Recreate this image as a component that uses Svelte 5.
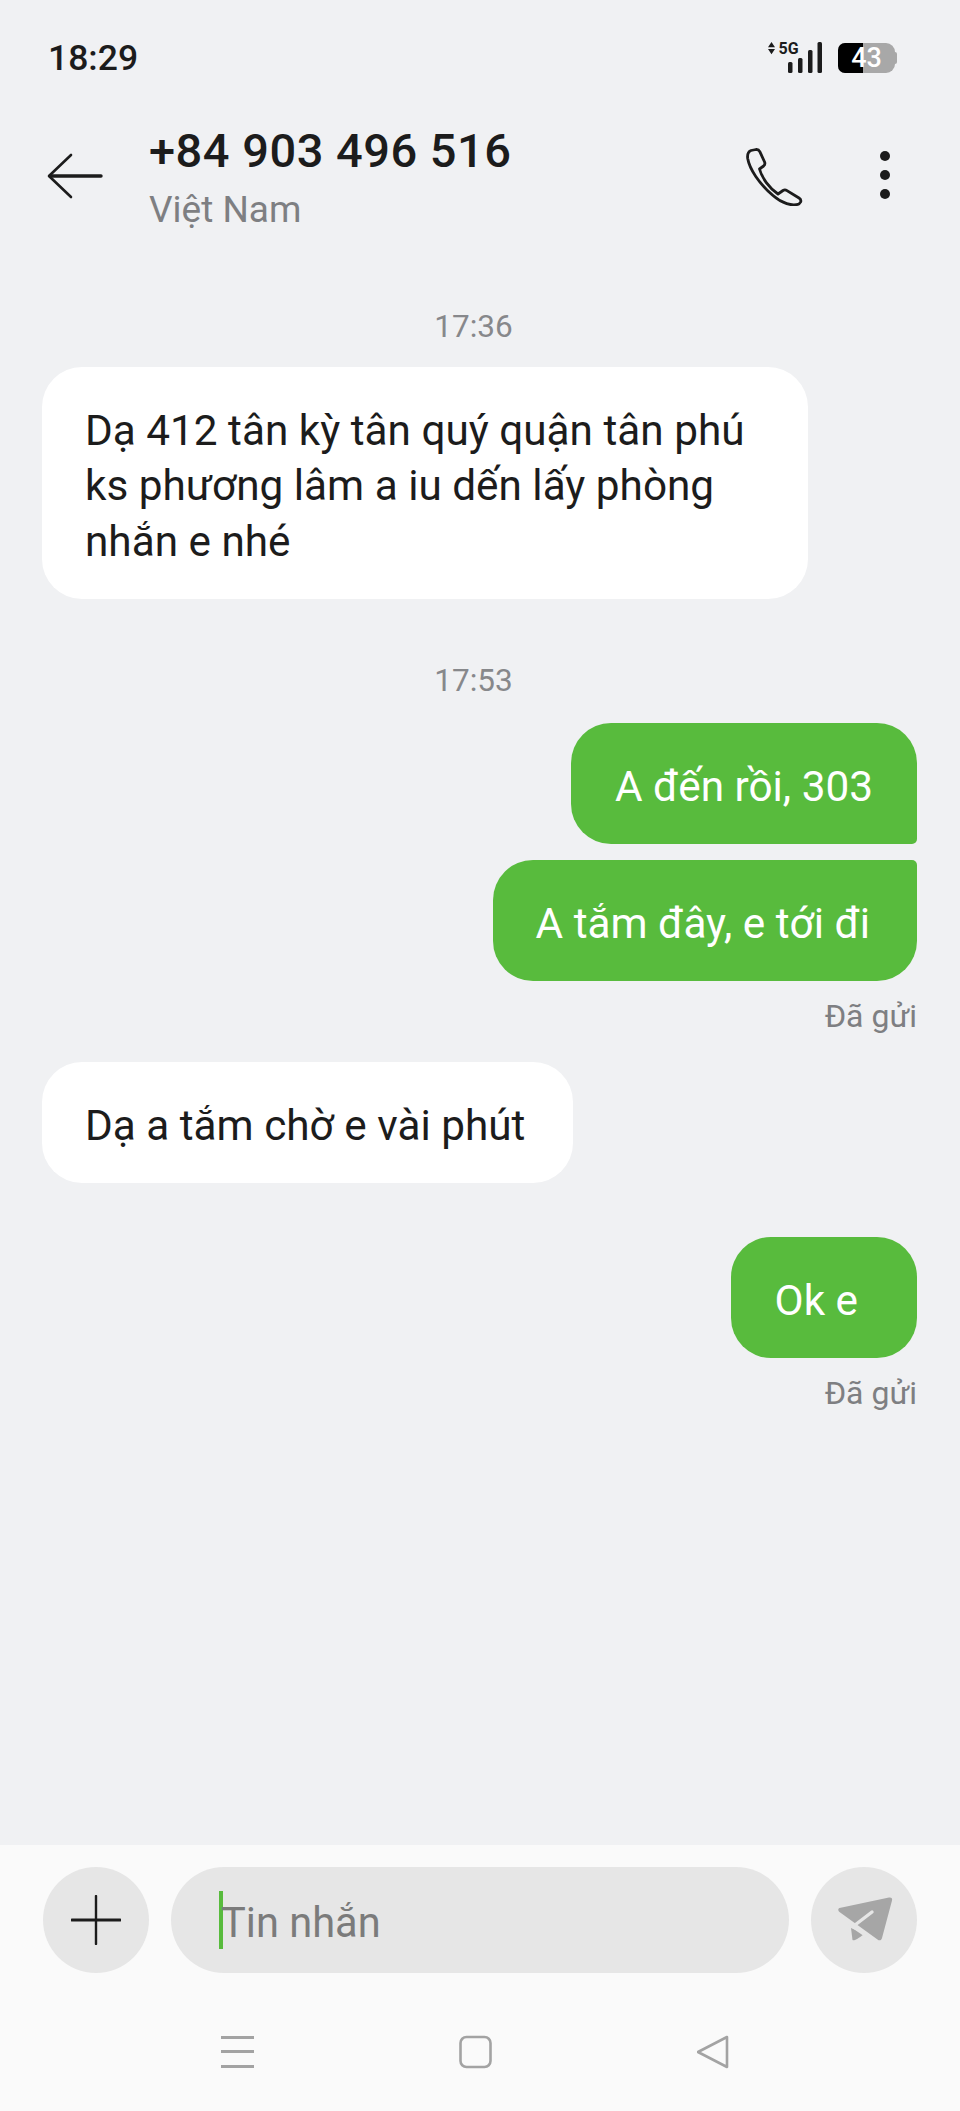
<script>
	const firstReply = "Dạ 412 tân kỳ tân quý quận tân phú ks phương lâm a iu dến lấy phòng nhắn e nhé";
</script>

<div class="screen">
	<div class="status-bar">
		<span class="clock">18:29</span>
		<div class="status-icons">
			<svg class="signal" width="54" height="36" viewBox="0 -4 54 36">
				<path d="M0 5.200 3.500 0 7 5.200ZM0 7 3.500 12.200 7 7Z" fill="#1c1c1c" />
				<text x="10.500" y="11.500" class="five-g">5G</text>
				<rect x="20" y="20" width="4.500" height="11" rx="1.500" />
				<rect x="30" y="16" width="4.500" height="15" rx="1.500" />
				<rect x="40" y="8" width="4.500" height="23" rx="1.500" />
				<rect x="49.500" y="0" width="4.500" height="31" rx="1.500" />
			</svg>
			<div class="battery">
				<div class="battery-used"></div>
				<span class="battery-level">43</span>
			</div>
		</div>
	</div>

	<header class="top-bar">
		<svg class="back" width="56" height="46" viewBox="0 0 56 46" fill="none" stroke="#1c1c1c" stroke-linecap="round" stroke-linejoin="round">
			<path d="M24 2 2 23 24 44" stroke-width="2.600" />
			<path d="M3 23H54" stroke-width="3.400" />
		</svg>
		<div class="contact">
			<div class="number">+84 903 496 516</div>
			<div class="country">Việt Nam</div>
		</div>
		<svg class="phone" width="58" height="58" viewBox="0 0 58 58" fill="none" stroke="#1c1c1c" stroke-width="2.800" stroke-linejoin="round">
			<path d="M5 2.500 10 1.500C12 1.300 13 2 13.800 3.600L18.600 14C19.200 15.600 19 16.800 17.600 18L13.500 21C16 30 23 40 32 46L37 42.500C38.400 41.600 39.600 41.700 41 42.600L53 50C54.600 51 55.200 52.400 54.600 54L53 56C46 58.500 36 55.500 27 47.500 13 35.500 3.500 21 1.700 10.500 1.200 6.500 2.500 3.500 5 2.500Z" />
		</svg>
		<div class="kebab">
			<span></span><span></span><span></span>
		</div>
	</header>

	<main class="thread">
		<div class="time first">17:36</div>
		<div class="bubble in wide">{firstReply}</div>

		<div class="time second">17:53</div>
		<div class="bubble out tail-bottom">A đến rồi, 303</div>
		<div class="bubble out tail-top">A tắm đây, e tới đi</div>
		<div class="sent">Đã gửi</div>

		<div class="bubble in after-sent">Dạ a tắm chờ e vài phút</div>

		<div class="bubble out after-in">Ok e</div>
		<div class="sent">Đã gửi</div>
	</main>

	<footer class="bottom">
		<div class="composer">
			<button class="round" aria-label="add">
				<svg width="50" height="50" viewBox="0 0 50 50" stroke="#1c1c1c" stroke-linecap="round">
					<path d="M25 1V49" stroke-width="2.400" />
					<path d="M1 25H49" stroke-width="3" />
				</svg>
			</button>
			<div class="input">
				<span class="caret"></span>
				<span class="placeholder">Tin nhắn</span>
			</div>
			<button class="round" aria-label="send">
				<svg class="plane" width="56" height="46" viewBox="0 0 56 46">
					<path d="M1.500 11 51 .5C53.500 0 54.500 1.500 54 3.500L44 41C43.300 43.500 41.500 44 39.500 42.500L1.500 15C-.3 13.500 0 11.500 1.500 11Z" fill="#a6a6a6" />
					<path d="M13 31 14.500 43C16 44 18 43 26.500 37Z" fill="#a6a6a6" />
					<path d="M17 28 34 15" stroke="#e6e6e6" stroke-width="3.400" stroke-linecap="round" />
					<path d="M11 27 30 40" stroke="#e6e6e6" stroke-width="3" />
				</svg>
			</button>
		</div>
		<nav class="nav-keys">
			<svg width="34" height="34" viewBox="0 0 34 34" fill="#a3a3a3">
				<rect x="0" y="1" width="33" height="3" />
				<rect x="0" y="15" width="33" height="3" />
				<rect x="0" y="30" width="33" height="3" />
			</svg>
			<svg width="34" height="34" viewBox="0 0 34 34" fill="none" stroke="#a3a3a3" stroke-width="2.600">
				<rect x="1.500" y="2" width="30" height="30" rx="6" />
			</svg>
			<svg width="34" height="34" viewBox="0 0 34 34" fill="none" stroke="#a3a3a3" stroke-width="2.600" stroke-linejoin="round">
				<path d="M30 2 1 17 30 32Z" />
			</svg>
		</nav>
	</footer>
</div>

<style>
	:global(body) {
		margin: 0;
	}

	.screen {
		width: 960px;
		height: 2111px;
		display: flex;
		flex-direction: column;
		background: #f0f1f3;
		font-family: Roboto, "Noto Sans", sans-serif;
		color: #1c1c1c;
		overflow: hidden;
	}

	.status-bar {
		height: 40px;
		padding: 38px 65px 0 48px;
		display: flex;
		justify-content: space-between;
		align-items: center;
	}

	.clock {
		font-size: 35.500px;
		font-weight: 500;
	}

	.status-icons {
		display: flex;
		align-items: center;
		gap: 16px;
	}

	.signal {
		margin-bottom: 4px;
	}

	.signal rect {
		fill: #1c1c1c;
	}

	.five-g {
		font-size: 16px;
		font-weight: 700;
		fill: #1c1c1c;
		font-family: Roboto, sans-serif;
	}

	.battery {
		position: relative;
		width: 57px;
		height: 30px;
		border-radius: 7px 9px 9px 7px;
		background: #a8a8a8;
		display: flex;
		align-items: center;
		justify-content: center;
	}

	.battery::after {
		content: "";
		position: absolute;
		left: 57px;
		top: 9px;
		width: 2px;
		height: 12px;
		border-radius: 0 2px 2px 0;
		background: #a8a8a8;
	}

	.battery-used {
		position: absolute;
		left: 0;
		top: 0;
		bottom: 0;
		width: 25px;
		border-radius: 7px 0 0 7px;
		background: #000;
	}

	.battery-level {
		position: relative;
		color: #fff;
		font-size: 27px;
		font-weight: 500;
	}

	.top-bar {
		margin-top: 45px;
		height: 110px;
		padding: 0 0 0 47px;
		display: flex;
		align-items: center;
	}

	.back {
		margin-top: -4px;
	}

	.contact {
		margin-left: 46px;
		flex: 1;
	}

	.number {
		font-size: 47px;
		font-weight: 500;
		line-height: 54px;
		letter-spacing: 0.500px;
	}

	.country {
		font-size: 37px;
		line-height: 44px;
		margin-top: 10px;
		color: #7e7f82;
	}

	.phone {
		margin: -2px 0 0 3px;
	}

	.kebab {
		width: 10px;
		margin: -6px 70px 0 76px;
		display: flex;
		flex-direction: column;
		gap: 9px;
	}

	.kebab span {
		width: 10px;
		height: 10px;
		border-radius: 50%;
		background: #1c1c1c;
	}

	.thread {
		flex: 1;
		display: flex;
		flex-direction: column;
		padding: 0 43px 0 42px;
	}

	.time {
		align-self: center;
		margin-left: -12px;
		font-size: 31.500px;
		line-height: 40px;
		color: #87888b;
	}

	.time.first {
		margin-top: 74px;
		margin-bottom: 20px;
	}

	.time.second {
		margin-top: 62px;
		margin-bottom: 22px;
	}

	.bubble {
		font-size: 42.300px;
		line-height: 55.500px;
		padding: 35.500px 44px 30px;
		border-radius: 40px;
		box-sizing: border-box;
	}

	.in {
		align-self: flex-start;
		background: #fff;
		padding-left: 43px;
		padding-right: 48px;
	}

	.wide {
		width: 766px;
	}

	.out {
		align-self: flex-end;
		background: #58bb3d;
		color: #fff;
	}

	.tail-bottom {
		border-bottom-right-radius: 5px;
	}

	.tail-top {
		border-top-right-radius: 5px;
		margin-top: 16px;
		padding-left: 43px;
		padding-right: 47px;
	}

	.after-sent {
		margin-top: 26px;
	}

	.after-in {
		margin-top: 54px;
		padding-right: 59px;
	}

	.sent {
		align-self: flex-end;
		font-size: 32px;
		line-height: 40px;
		margin-top: 15px;
		color: #7e7f82;
	}

	.bottom {
		background: #fafafa;
		height: 266px;
		box-sizing: border-box;
		padding-top: 22px;
	}

	.composer {
		display: flex;
		gap: 22px;
		padding: 0 43px;
	}

	.round {
		width: 106px;
		height: 106px;
		border: 0;
		padding: 0;
		border-radius: 50%;
		background: #e6e6e6;
		display: flex;
		align-items: center;
		justify-content: center;
		flex: none;
	}

	.plane {
		margin-left: 3px;
	}

	.input {
		flex: 1;
		height: 106px;
		border-radius: 53px;
		background: #e6e6e6;
		display: flex;
		align-items: center;
		padding-left: 48px;
	}

	.caret {
		width: 4px;
		height: 58px;
		background: #58bb3d;
	}

	.placeholder {
		font-size: 41.600px;
		color: #7b7b7b;
		margin-top: 4px;
		margin-left: -2px;
	}

	.nav-keys {
		margin-top: 62px;
		padding-left: 221px;
		display: flex;
		gap: 204px;
	}
</style>
